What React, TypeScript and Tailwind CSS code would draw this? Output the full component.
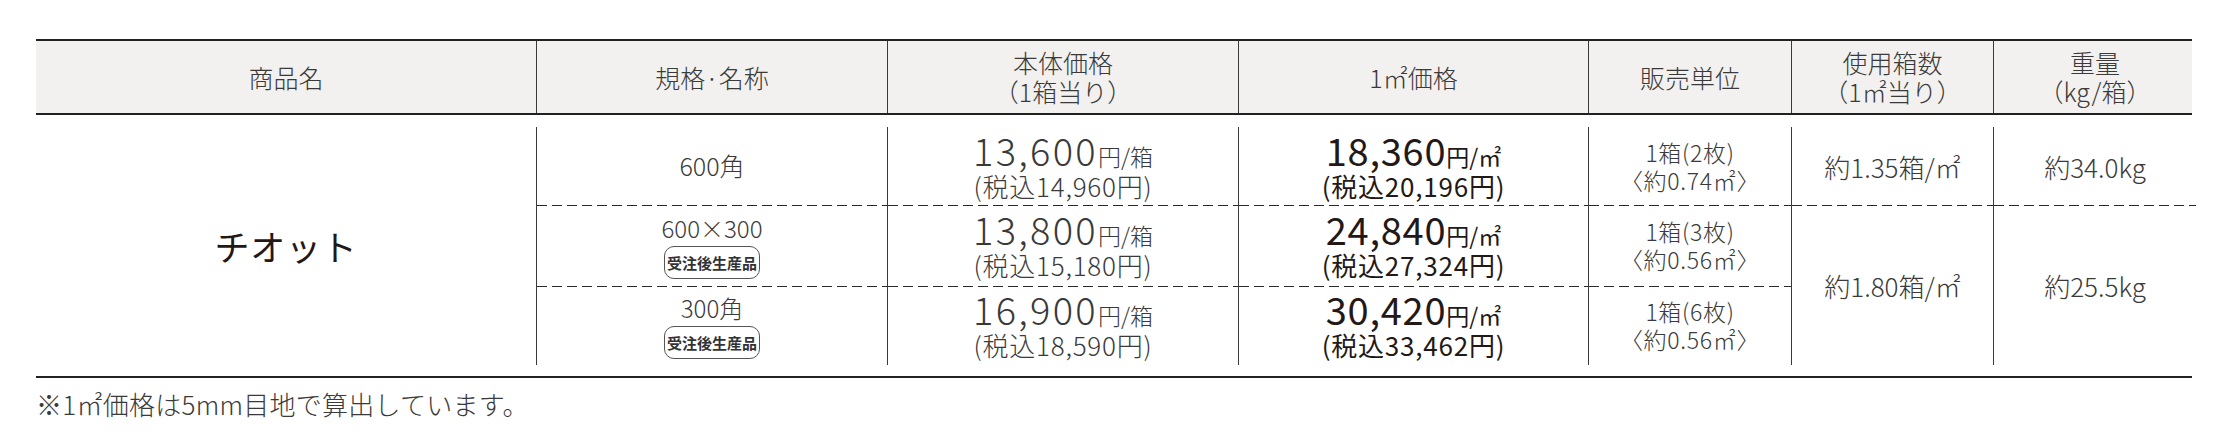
import React from "react";

const dash =
  "bg-[repeating-linear-gradient(90deg,#2a2a2a_0_10px,transparent_10px_15px)] bg-size-[100%_1px] bg-no-repeat bg-top";

const Badge: React.FC = () => (
  <span className="mt-[3px] inline-flex h-[33px] w-[96px] items-center justify-center rounded-[10px] border border-[#555] text-[15px] font-bold leading-none text-[#333]">
    受注後生産品
  </span>
);

const Price: React.FC<{ num: string; unit: string; tax: string; bold?: boolean }> = ({
  num,
  unit,
  tax,
  bold,
}) => (
  <div className={bold ? "font-normal text-[#231815]" : "font-light text-[#3a3a3a]"}>
    <div className="flex h-[38px] items-baseline justify-center">
      <span className={bold ? "text-[38px] leading-none tracking-[0.02em]" : "text-[38px] leading-none tracking-[0.06em]"}>
        {num}
      </span>
      <span className="text-[23px] leading-none">{unit}</span>
    </div>
    <div className="mt-[1px] text-[26px] leading-[32px] tracking-[0.03em]">{tax}</div>
  </div>
);

const Unit: React.FC<{ a: string; b: string }> = ({ a, b }) => (
  <div className="flex flex-col gap-[1px] text-[23px] font-light leading-[27px] tracking-[0.03em] text-[#3a3a3a]">
    <div>{a}</div>
    <div>{b}</div>
  </div>
);

const cell = "flex flex-col items-center justify-center border-l border-[#3a3a3a] text-center";

export default function App() {
  return (
    <div className="w-[2228px] bg-white px-[36px] pt-[39px] font-['Noto_Sans_CJK_JP','Noto_Sans',sans-serif] text-[#3a3a3a]">
      {/* header */}
      <div className="grid h-[76px] grid-cols-[500px_351px_351px_350px_203px_202px_203px] border-y-2 border-[#222] bg-[#f2f1ef] text-[25px] font-light leading-[29px]">
        <div className="flex items-center justify-center">商品名</div>
        <div className={cell}>規格·名称</div>
        <div className={cell}>
          <span>本体価格</span>
          <span>（1箱当り）</span>
        </div>
        <div className={cell}>1㎡価格</div>
        <div className={cell}>販売単位</div>
        <div className={cell}>
          <span>使用箱数</span>
          <span>（1㎡当り）</span>
        </div>
        <div className={cell}>
          <span>重量</span>
          <span>（kg/箱）</span>
        </div>
      </div>

      {/* body */}
      <div className="border-b-2 border-[#222] pt-[12px] pb-[11px]">
        <div className="grid grid-cols-[500px_351px_351px_350px_203px_202px_203px] grid-rows-[78px_81px_79px]">
          <div className="row-span-3 flex items-center justify-center text-[35px] tracking-[0.02em] text-[#231815]">
            チオット
          </div>

          <div className={cell}>
            <span className="text-[25px] font-light">600角</span>
          </div>
          <div className={cell}>
            <Price num="13,600" unit="円/箱" tax="(税込14,960円)" />
          </div>
          <div className={cell}>
            <Price num="18,360" unit="円/㎡" tax="(税込20,196円)" bold />
          </div>
          <div className={cell}>
            <Unit a="1箱(2枚)" b="〈約0.74㎡〉" />
          </div>
          <div className={cell}>
            <span className="text-[26px] font-light">約1.35箱/㎡</span>
          </div>
          <div className={cell}>
            <span className="text-[26px] font-light">約34.0kg</span>
          </div>

          <div className={`${cell} ${dash}`}>
            <span className="text-[24px] font-light leading-[30px]">600×300</span>
            <Badge />
          </div>
          <div className={`${cell} ${dash}`}>
            <Price num="13,800" unit="円/箱" tax="(税込15,180円)" />
          </div>
          <div className={`${cell} ${dash}`}>
            <Price num="24,840" unit="円/㎡" tax="(税込27,324円)" bold />
          </div>
          <div className={`${cell} ${dash}`}>
            <Unit a="1箱(3枚)" b="〈約0.56㎡〉" />
          </div>
          <div className={`${cell} ${dash} row-span-2`}>
            <span className="text-[26px] font-light">約1.80箱/㎡</span>
          </div>
          <div className={`${cell} ${dash} row-span-2`}>
            <span className="text-[26px] font-light">約25.5kg</span>
          </div>

          <div className={`${cell} ${dash}`}>
            <span className="text-[24px] font-light leading-[30px]">300角</span>
            <Badge />
          </div>
          <div className={`${cell} ${dash}`}>
            <Price num="16,900" unit="円/箱" tax="(税込18,590円)" />
          </div>
          <div className={`${cell} ${dash}`}>
            <Price num="30,420" unit="円/㎡" tax="(税込33,462円)" bold />
          </div>
          <div className={`${cell} ${dash}`}>
            <Unit a="1箱(6枚)" b="〈約0.56㎡〉" />
          </div>
        </div>
      </div>

      <p className="mt-[11px] text-[26px] font-light leading-[30px] tracking-[0.01em]">
        ※1㎡価格は5mm目地で算出しています。
      </p>
    </div>
  );
}
